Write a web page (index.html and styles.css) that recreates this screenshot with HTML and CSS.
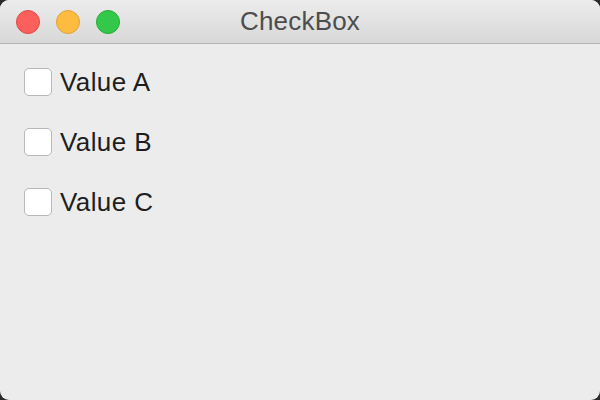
FILE: index.html
```html
<!DOCTYPE html>
<html>
<head>
<meta charset="utf-8">
<link rel="stylesheet" href="styles.css">
</head>
<body>
<div class="window">
  <div class="titlebar">
    <div class="lights">
      <span class="light red"></span>
      <span class="light yellow"></span>
      <span class="light green"></span>
    </div>
    <div class="title">CheckBox</div>
  </div>
  <div class="content">
    <label class="row"><span class="box"></span><span class="label">Value A</span></label>
    <label class="row"><span class="box"></span><span class="label">Value B</span></label>
    <label class="row"><span class="box"></span><span class="label">Value C</span></label>
  </div>
</div>
</body>
</html>
```
FILE: styles.css
```css
html, body {
  margin: 0;
  padding: 0;
  width: 600px;
  height: 400px;
  background: #2a2a2a;
  overflow: hidden;
}
.window {
  width: 600px;
  height: 400px;
  background: #ececec;
  border-radius: 9px;
  overflow: hidden;
  font-family: "Liberation Sans", Arial, sans-serif;
  display: flex;
  flex-direction: column;
}
.titlebar {
  position: relative;
  height: 43px;
  flex: 0 0 43px;
  background: linear-gradient(#ececec, #d8d8d8);
  border-bottom: 1px solid #b4b4b4;
  display: flex;
  align-items: center;
  justify-content: center;
}
.lights {
  position: absolute;
  left: 16px;
  top: 10px;
  display: flex;
  gap: 16px;
}
.light {
  width: 22px;
  height: 22px;
  border-radius: 50%;
  border: 1px solid;
}
.red { background: #fc605c; border-color: #de4a46; }
.yellow { background: #fdbc40; border-color: #dea236; }
.green { background: #34c84a; border-color: #27aa35; }
.title {
  font-size: 26px;
  color: #4d4d4d;
  line-height: 43px;
  letter-spacing: 0.2px;
}
.content {
  padding: 24px 0 0 24px;
  display: flex;
  flex-direction: column;
  gap: 32px;
}
.row {
  display: flex;
  align-items: center;
  height: 28px;
  gap: 8px;
}
.box {
  width: 26px;
  height: 26px;
  background: #ffffff;
  border: 1px solid #b8b8b8;
  border-radius: 5px;
  box-sizing: content-box;
}
.label {
  font-size: 26px;
  color: #1e1e1e;
  line-height: 28px;
  letter-spacing: 0.4px;
}
```
